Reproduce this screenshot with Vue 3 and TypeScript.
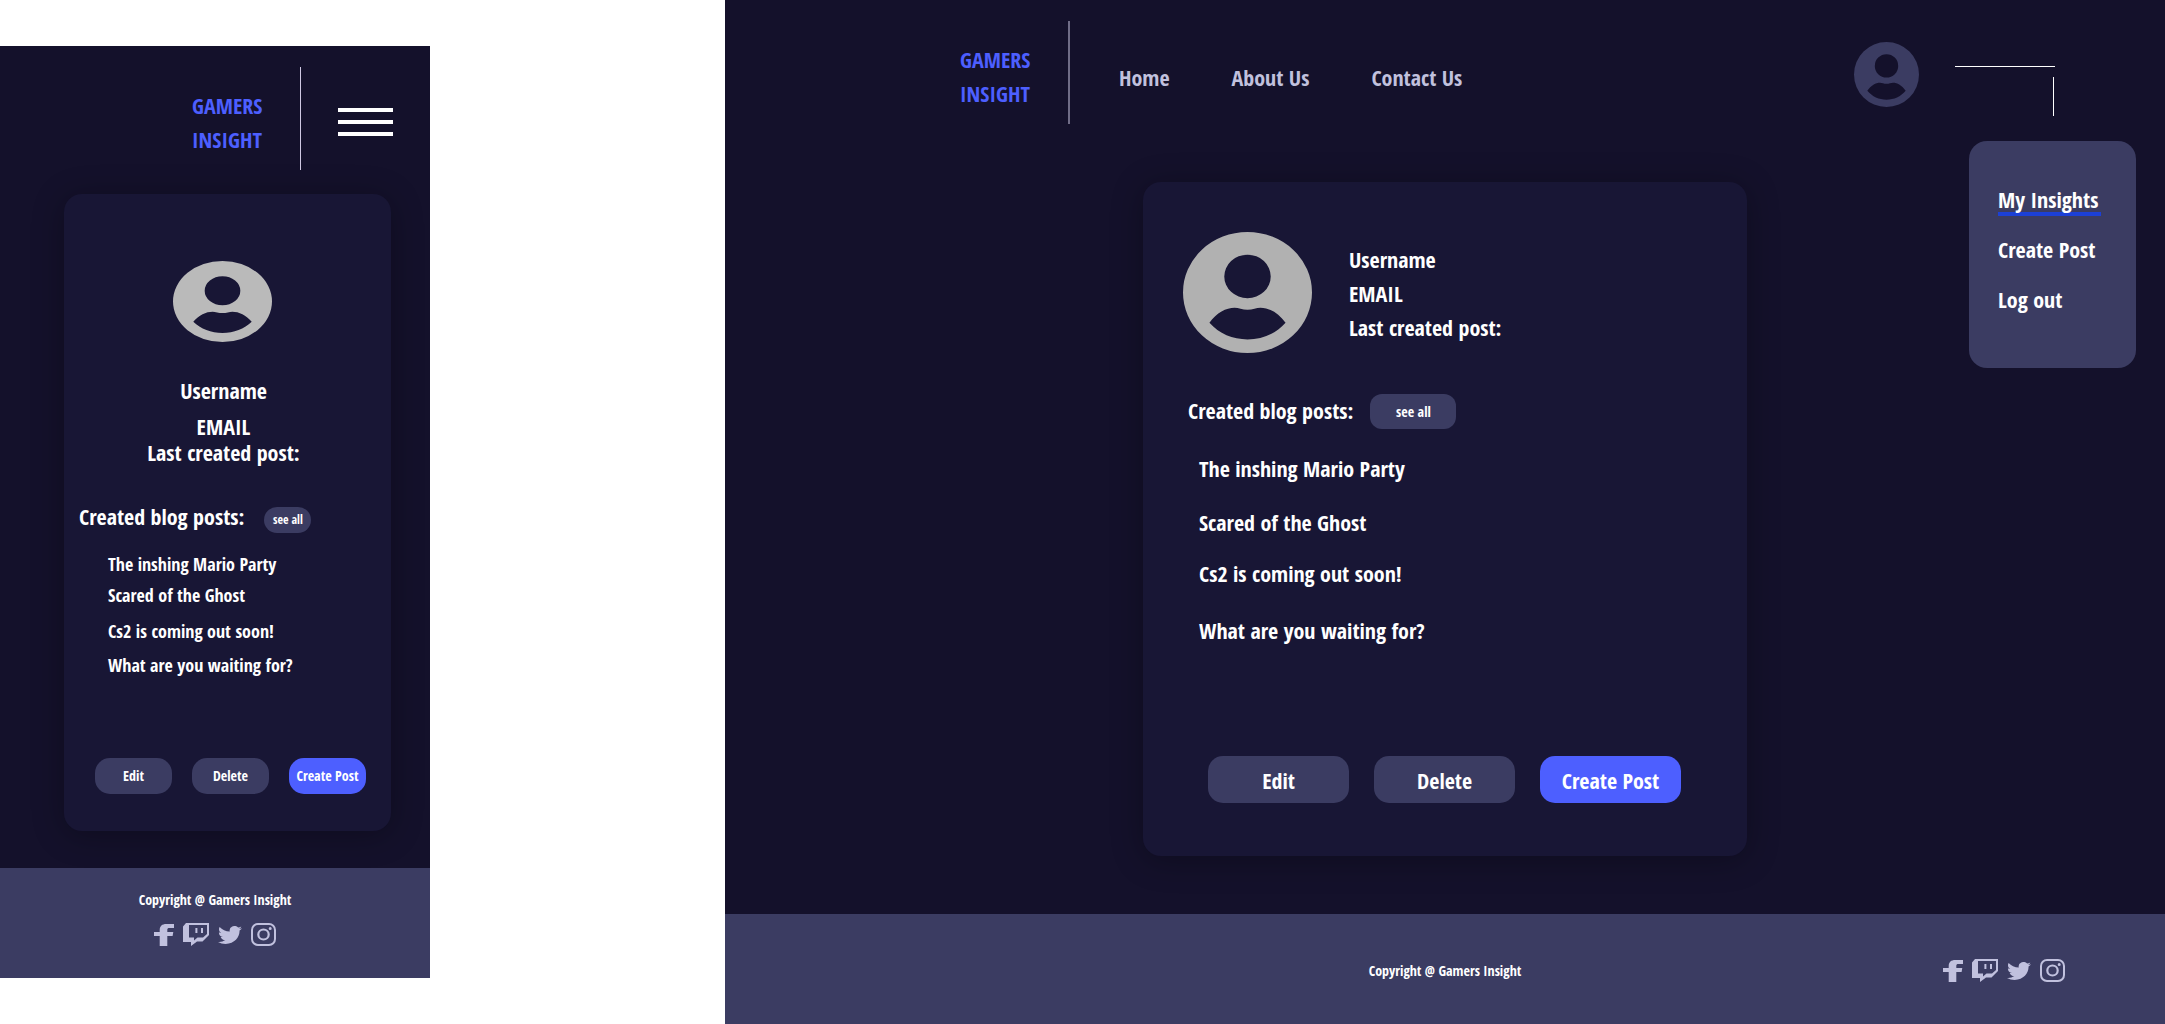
<script setup lang="ts">
import { defineComponent, h } from 'vue'

const navItems: string[] = ['Home', 'About Us', 'Contact Us']
const menuItems: string[] = ['My Insights', 'Create Post', 'Log out']
const activeItem = 'My Insights'
const profile: string[] = ['Username', 'EMAIL', 'Last created post:']
const posts: string[] = [
  'The inshing Mario Party',
  'Scared of the Ghost',
  'Cs2 is coming out soon!',
  'What are you waiting for?',
]
const actions: { label: string; primary: boolean }[] = [
  { label: 'Edit', primary: false },
  { label: 'Delete', primary: false },
  { label: 'Create Post', primary: true },
]

const UserIcon = defineComponent({
  render: () =>
    h('svg', { viewBox: '0 0 20 20', preserveAspectRatio: 'none', 'aria-hidden': 'true' }, [
      h('path', {
        fill: 'currentColor',
        'fill-rule': 'evenodd',
        d: 'M10 0a10 10 0 1 0 0 20a10 10 0 0 0 0-20ZM10 3.75a3.6 3.6 0 1 1 0 7.2a3.6 3.6 0 0 1 0-7.2ZM4.1 15C5.2 13.3 6.7 12.5 8 12.5C8.6 12.5 9.2 12.85 10 12.85C10.8 12.85 11.4 12.5 12 12.5C13.3 12.5 14.8 13.3 15.9 15C14.4 16.8 12.3 17.75 10 17.75C7.7 17.75 5.6 16.8 4.1 15Z',
      }),
    ]),
})

interface Social {
  name: string
  width: number
  height: number
  box: string
  path: string
}

const socials: Social[] = [
  {
    name: 'Facebook',
    width: 20,
    height: 22,
    box: '0 0 20 22',
    path: 'M5.7 8V6.4C5.7 2 8 0 12.4 0H20V4H15.4C13.9 4 13.3 4.6 13.3 6V8H19.3L18.6 12H13.3V22H5.7V12H0V8Z',
  },
  {
    name: 'Twitch',
    width: 26,
    height: 23,
    box: '0 0 26 23',
    path: 'M3 0H26V12L19.5 18.5H14L8 23V19H0V3.5ZM6 2V14.5H11V17.5L14.5 14.5H20L24 11V2ZM12.4 5H14.4V10H12.4ZM18 5H20V10H18Z',
  },
  {
    name: 'Twitter',
    width: 24,
    height: 18,
    box: '0 2.2 24 19.6',
    path: 'M23.953 4.57a10 10 0 01-2.825.775 4.958 4.958 0 002.163-2.723c-.951.555-2.005.959-3.127 1.184a4.92 4.92 0 00-8.384 4.482C7.69 8.095 4.067 6.13 1.64 3.162a4.822 4.822 0 00-.666 2.475c0 1.71.87 3.213 2.188 4.096a4.904 4.904 0 01-2.228-.616v.06a4.923 4.923 0 003.946 4.827 4.996 4.996 0 01-2.212.085 4.936 4.936 0 004.604 3.417 9.867 9.867 0 01-6.102 2.105c-.39 0-.779-.023-1.17-.067a13.995 13.995 0 007.557 2.209c9.053 0 13.998-7.496 13.998-13.985 0-.21 0-.42-.015-.63A9.935 9.935 0 0024 4.59z',
  },
  {
    name: 'Instagram',
    width: 25,
    height: 23,
    box: '0 0 25 23',
    path: 'M7 0H18A7 7 0 0 1 25 7V16A7 7 0 0 1 18 23H7A7 7 0 0 1 0 16V7A7 7 0 0 1 7 0ZM7 2A5 5 0 0 0 2 7V16A5 5 0 0 0 7 21H18A5 5 0 0 0 23 16V7A5 5 0 0 0 18 2ZM12.5 5.4A6.3 6.1 0 1 1 12.5 17.6A6.3 6.1 0 1 1 12.5 5.4ZM12.5 7.5A4.1 4 0 1 0 12.5 15.5A4.1 4 0 1 0 12.5 7.5ZM19.2 4A1.5 1.5 0 1 1 19.2 7A1.5 1.5 0 1 1 19.2 4Z',
  },
]
</script>

<template>
  <div class="board">
    <section class="panel mobile">
      <header class="header">
        <a class="logo" href="#">GAMERS<br />INSIGHT</a>
        <span class="divider"></span>
        <button class="burger" type="button" aria-label="Menu">
          <span></span><span></span><span></span>
        </button>
      </header>
      <main class="card">
        <UserIcon class="avatar" />
        <ul class="profile">
          <li v-for="line in profile" :key="line">{{ line }}</li>
        </ul>
        <div class="heading">
          <h2>Created blog posts:</h2>
          <button class="see-all" type="button">see all</button>
        </div>
        <ul class="posts">
          <li v-for="post in posts" :key="post">{{ post }}</li>
        </ul>
        <div class="actions">
          <button v-for="a in actions" :key="a.label" type="button" :class="{ primary: a.primary }">{{ a.label }}</button>
        </div>
      </main>
      <footer class="footer">
        <p>Copyright @ Gamers Insight</p>
        <nav class="socials">
          <a v-for="s in socials" :key="s.name" href="#" :aria-label="s.name">
            <svg :width="s.width" :height="s.height" :viewBox="s.box" preserveAspectRatio="none">
              <path :d="s.path" fill="currentColor" fill-rule="evenodd" />
            </svg>
          </a>
        </nav>
      </footer>
    </section>

    <section class="panel desktop">
      <header class="header">
        <a class="logo" href="#">GAMERS<br />INSIGHT</a>
        <span class="divider"></span>
        <nav class="nav">
          <a v-for="item in navItems" :key="item" href="#">{{ item }}</a>
        </nav>
        <div class="account">
          <UserIcon class="account-icon" />
          <span class="line across"></span>
          <span class="line down"></span>
          <ul class="menu">
            <li v-for="item in menuItems" :key="item">
              <a href="#" :class="{ active: item === activeItem }">{{ item }}</a>
            </li>
          </ul>
        </div>
      </header>
      <main class="card">
        <div class="intro">
          <UserIcon class="avatar" />
          <ul class="profile">
            <li v-for="line in profile" :key="line">{{ line }}</li>
          </ul>
        </div>
        <div class="heading">
          <h2>Created blog posts:</h2>
          <button class="see-all" type="button">see all</button>
        </div>
        <ul class="posts">
          <li v-for="post in posts" :key="post">{{ post }}</li>
        </ul>
        <div class="actions">
          <button v-for="a in actions" :key="a.label" type="button" :class="{ primary: a.primary }">{{ a.label }}</button>
        </div>
      </main>
      <footer class="footer">
        <p>Copyright @ Gamers Insight</p>
        <nav class="socials">
          <a v-for="s in socials" :key="s.name" href="#" :aria-label="s.name">
            <svg :width="s.width" :height="s.height" :viewBox="s.box" preserveAspectRatio="none">
              <path :d="s.path" fill="currentColor" fill-rule="evenodd" />
            </svg>
          </a>
        </nav>
      </footer>
    </section>
  </div>
</template>

<style>
body {
  background: #ffffff;
}
</style>

<style scoped>
.board {
  display: grid;
  grid-template-columns: 430fr 1440fr;
  column-gap: 295px;
  align-items: start;
  min-height: 100vh;
  font-family: "Open Sans Condensed", "Open Sans", sans-serif;
  font-size: 22px;
  font-weight: 700;
  line-height: 34px;
  color: #ffffff;
}

ul,
h2,
p {
  margin: 0;
  padding: 0;
  list-style: none;
  font-size: inherit;
}

a {
  color: inherit;
  text-decoration: none;
}

button {
  padding: 0;
  border: 0;
  font: inherit;
  color: inherit;
  background: #3b3c62;
}

.panel {
  display: flex;
  flex-direction: column;
  background: #14112b;
}

.header {
  display: flex;
  align-items: center;
  padding-top: 21px;
}

.logo {
  width: 108px;
  padding-top: 6px;
  color: #4d5fff;
}

.divider {
  height: 103px;
}

.card {
  background: #181635;
  border-radius: 18px;
  box-shadow: 0 4px 32px rgba(0, 0, 0, 0.3);
}

.avatar {
  display: block;
}

.heading {
  display: flex;
}

.posts,
.profile {
  display: grid;
  align-items: center;
}

.actions {
  display: flex;
}

.actions .primary {
  background: #4d5fff;
}

.footer {
  background: #3b3c62;
  font-size: 14px;
  line-height: 20px;
}

.socials {
  display: flex;
  align-items: center;
  gap: 9px;
  color: #c1c1de;
}

.socials a,
.socials svg {
  display: block;
}

/* Mobile layout */
.mobile {
  margin-top: 46px;
}

.mobile .header {
  padding-left: 192px;
}

.mobile .divider {
  width: 1px;
  background: #cfc8e2;
}

.burger {
  display: flex;
  flex-direction: column;
  gap: 8px;
  width: 55px;
  margin: 6px 0 0 37px;
  background: none;
}

.burger span {
  height: 4px;
  background: #ffffff;
}

.mobile .card {
  margin: 24px 39px 37px 64px;
  padding: 67px 0 37px;
}

.mobile .avatar {
  width: 99px;
  height: 81px;
  margin-left: 109px;
  color: #bababa;
}

.mobile .profile {
  grid-template-rows: 46px 26px 26px;
  margin: 25px 8px 0 0;
  text-align: center;
}

.mobile .heading {
  gap: 20px;
  margin: 34px 0 0 15px;
}

.mobile .see-all {
  align-self: flex-end;
  width: 47px;
  height: 26px;
  border-radius: 13px;
  font-size: 12px;
  line-height: 26px;
}

.mobile .posts {
  grid-template-rows: 30px 32px 40px 28px;
  margin: 16px 0 0 44px;
  font-size: 18px;
  line-height: 28px;
}

.mobile .actions {
  gap: 20px;
  margin: 79px 0 0 31px;
}

.mobile .actions button {
  width: 77px;
  height: 36px;
  border-radius: 15px;
  font-size: 14px;
  line-height: 36px;
}

.mobile .footer {
  display: flex;
  flex-direction: column;
  align-items: center;
  gap: 13px;
  padding: 22px 0 32px;
}

/* Desktop layout */
.desktop {
  min-height: 100vh;
}

.desktop .header {
  padding-left: 235px;
  padding-right: 246px;
}

.desktop .divider {
  width: 2px;
  background: #706d87;
}

.nav {
  display: flex;
  gap: 62px;
  padding: 8px 0 0 49px;
  color: #c1c1de;
}

.account {
  position: relative;
  width: 65px;
  height: 65px;
  margin: 4px 0 0 auto;
}

.account-icon {
  display: block;
  width: 65px;
  height: 65px;
  color: #3b3c62;
}

.line {
  position: absolute;
  background: #ffffff;
}

.across {
  top: 24px;
  left: 101px;
  width: 100px;
  height: 1px;
}

.down {
  top: 35px;
  left: 199px;
  width: 1px;
  height: 39px;
}

.menu {
  position: absolute;
  top: 99px;
  left: 115px;
  box-sizing: border-box;
  width: 167px;
  padding: 33px 29px 44px;
  border-radius: 18px;
  background: #3b3c62;
}

.menu li {
  display: flex;
  align-items: center;
  height: 50px;
}

.menu a {
  width: 103px;
  line-height: 26px;
}

.menu .active {
  box-shadow: 0 4px #1c40d6;
}

.desktop .card {
  width: 604px;
  box-sizing: border-box;
  margin: 58px auto;
  padding: 50px 40px 53px;
}

.intro {
  display: flex;
  align-items: center;
  gap: 37px;
}

.desktop .avatar {
  width: 129px;
  height: 121px;
  color: #b1b1b1;
}

.desktop .heading {
  gap: 17px;
  margin: 41px 0 0 5px;
}

.desktop .heading h2 {
  line-height: 32px;
}

.desktop .see-all {
  width: 86px;
  height: 35px;
  border-radius: 12px;
  font-size: 14px;
  line-height: 35px;
}

.desktop .posts {
  grid-template-rows: 54px 54px 48px 66px;
  margin: 12px 0 0 16px;
}

.desktop .actions {
  gap: 25px;
  margin: 93px 0 0 25px;
}

.desktop .actions button {
  width: 141px;
  height: 47px;
  border-radius: 15px;
}

.desktop .footer {
  display: grid;
  grid-template-columns: 1fr auto 1fr;
  align-items: center;
  flex: 1;
  padding: 3px 100px 0;
}

.desktop .footer p {
  grid-column: 2;
}

.desktop .socials {
  justify-self: end;
}
</style>
